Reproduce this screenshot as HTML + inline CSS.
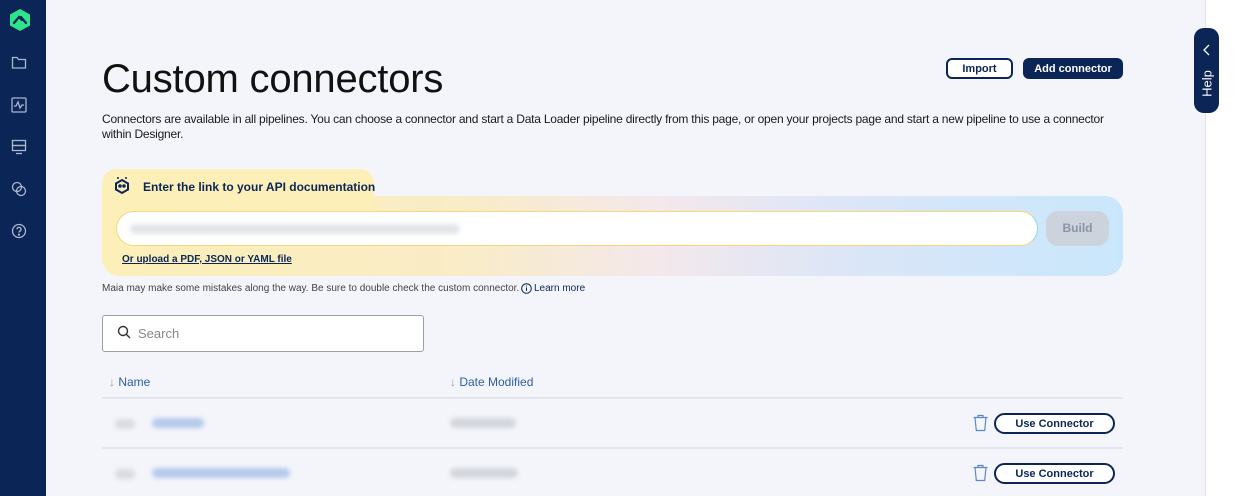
<!DOCTYPE html>
<html><head><style>
*{margin:0;padding:0;box-sizing:border-box}
body{width:1236px;height:496px;overflow:hidden;background:#fff;font-family:"Liberation Sans",sans-serif;position:relative;color:#111}
.side{position:absolute;left:0;top:0;width:46px;height:496px;background:#0b2656}
.main{position:absolute;left:46px;top:0;width:1160px;height:496px;background:#f4f5fa;border-right:1px solid #e2e4ea}
.ic{position:absolute;left:11px}
h1{position:absolute;left:102px;top:57px;font-size:40px;font-weight:400;color:#111;letter-spacing:-0.2px}
.p{position:absolute;left:102px;top:112px;width:1060px;font-size:12px;line-height:15px;color:#1a1a1a;letter-spacing:-0.22px;white-space:nowrap}
.btn{position:absolute;height:21px;border-radius:6px;font-size:11px;font-weight:bold;display:flex;align-items:center;justify-content:center}
.card{position:absolute;left:102px;top:196px;width:1021px;height:80px;border-radius:0 18px 18px 18px;background:linear-gradient(90deg,#fcefb8 0%,#f9ecc6 35%,#f3e8ec 55%,#d9e6f8 75%,#c9e7fb 100%)}
.tab{position:absolute;left:102px;top:169px;width:272px;height:40px;border-radius:14px 14px 0 0;background:#fcefb8}
.inp{position:absolute;left:116px;top:211px;width:922px;height:35px;border-radius:18px;background:#fff;border:1.5px solid #f5d87a;border-right-color:#8de0d8}
.build{position:absolute;left:1046px;top:211px;width:63px;height:35px;border-radius:12px;background:#cdd3dd;color:#8a94a6;font-weight:bold;font-size:12px;text-align:center;line-height:35px}
.blur{position:absolute;height:10px;border-radius:5px;filter:blur(2.5px)}
.search{position:absolute;left:102px;top:315px;width:322px;height:37px;border:1px solid #9aa0a8;border-radius:3px;background:#fff}
.hdr{position:absolute;top:375px;font-size:12px;color:#2b5ea7}
.line{position:absolute;left:102px;width:1021px;height:2px;background:#e3e5ea}
.use{position:absolute;left:994px;width:121px;height:21px;border:2px solid #0b2656;border-radius:11px;font-size:11px;font-weight:bold;color:#0b2656;display:flex;align-items:center;justify-content:center;background:#fff}
</style></head><body>
<div class="side">
<svg class="ic" style="left:8px;top:8px" width="24" height="24" viewBox="0 0 24 24"><polygon points="12,1 22,6.5 22,17.5 12,23 2,17.5 2,6.5" fill="#2ee38a"/><path d="M6 15l5-6 3 3M13 9l5 6" stroke="#0b2656" stroke-width="2.2" fill="none" stroke-linecap="round"/></svg>
<svg class="ic" style="top:55px" width="16" height="15" viewBox="0 0 16 15" fill="none" stroke="#aab7cf" stroke-width="1.3"><path d="M1.5 2.5h4.5l1.5 2h7v8.5h-13z"/></svg>
<svg class="ic" style="top:97px" width="16" height="16" viewBox="0 0 16 16" fill="none" stroke="#aab7cf" stroke-width="1.3"><rect x="1" y="1" width="14" height="14" rx="1"/><path d="M3 9h2l2-4 2 6 2-3h2"/></svg>
<svg class="ic" style="top:139px" width="16" height="16" viewBox="0 0 16 16" fill="none" stroke="#aab7cf" stroke-width="1.3"><rect x="1.5" y="1.5" width="13" height="5"/><rect x="1.5" y="6.5" width="13" height="5"/><path d="M5 14.5h6"/></svg>
<svg class="ic" style="top:181px" width="16" height="16" viewBox="0 0 16 16" fill="none" stroke="#aab7cf" stroke-width="1.3"><circle cx="6" cy="6" r="4.5"/><circle cx="10" cy="10" r="4.5"/></svg>
<svg class="ic" style="top:223px" width="16" height="16" viewBox="0 0 16 16" fill="none" stroke="#aab7cf" stroke-width="1.3"><circle cx="8" cy="8" r="6.5"/><path d="M6 6.3a2 2 0 1 1 2.5 2c-.5.2-.5.6-.5 1.2"/><circle cx="8" cy="11.6" r=".5" fill="#aab7cf"/></svg>
</div>
<div class="main"></div>
<div style="position:absolute;left:1194px;top:28px;width:25px;height:85px;background:#0b2656;border-radius:10px"></div>
<svg style="position:absolute;left:1202px;top:44px" width="10" height="12" viewBox="0 0 10 12"><path d="M7 1L2 6l5 5" stroke="#fff" stroke-width="1.3" fill="none"/></svg>
<div style="position:absolute;left:1187px;top:76px;width:40px;transform:rotate(-90deg);color:#fff;font-size:13px;text-align:center">Help</div>
<h1>Custom connectors</h1>
<div class="btn" style="left:946px;top:58px;width:67px;border:2px solid #0b2656;background:#fff;color:#0b2656">Import</div>
<div class="btn" style="left:1023px;top:58px;width:100px;background:#0b2656;color:#fff">Add connector</div>
<div class="p">Connectors are available in all pipelines. You can choose a connector and start a Data Loader pipeline directly from this page, or open your projects page and start a new pipeline to use a connector<br>within Designer.</div>
<div class="card"></div><div class="tab"></div>
<svg style="position:absolute;left:112px;top:176px" width="20" height="20" viewBox="0 0 20 20" fill="none" stroke="#0b2656" stroke-width="2"><path d="M10 4l6 3.5v6L10 17l-6-3.5v-6z"/><circle cx="8" cy="10" r=".8" fill="#0b2656"/><circle cx="12" cy="10" r=".8" fill="#0b2656"/><circle cx="6" cy="2" r="1" fill="#0b2656" stroke="none"/><circle cx="14" cy="2" r="1" fill="#0b2656" stroke="none"/></svg>
<div style="position:absolute;left:143px;top:180px;font-size:12px;font-weight:bold;color:#0b2656">Enter the link to your API documentation</div>
<div class="inp"></div>
<div class="blur" style="left:130px;top:224px;width:330px;background:#e2e4e9"></div>
<div class="build">Build</div>
<div style="position:absolute;left:122px;top:254px;font-size:10px;font-weight:bold;color:#0b2656;text-decoration:underline">Or upload a PDF, JSON or YAML file</div>
<div style="position:absolute;left:102px;top:283px;font-size:10px;color:#444">Maia may make some mistakes along the way. Be sure to double check the custom connector.</div>
<svg style="position:absolute;left:521px;top:283px" width="11" height="11" viewBox="0 0 11 11" fill="none" stroke="#0b2656"><circle cx="5.5" cy="5.5" r="4.8"/><path d="M5.5 4.5v3.5M5.5 2.5v1"/></svg>
<div style="position:absolute;left:534px;top:283px;font-size:10px;color:#0b2656">Learn more</div>
<div class="search"></div>
<svg style="position:absolute;left:117px;top:325px" width="14" height="14" viewBox="0 0 14 14" fill="none" stroke="#333" stroke-width="1.4"><circle cx="6" cy="6" r="4.5"/><path d="M9.5 9.5L13 13"/></svg>
<div style="position:absolute;left:138px;top:326px;font-size:13px;color:#888">Search</div>
<div class="hdr" style="left:109px"><span style="color:#999">↓</span> Name</div>
<div class="hdr" style="left:450px"><span style="color:#999">↓</span> Date Modified</div>
<div class="line" style="top:397px"></div><div class="line" style="top:447px"></div>
<div class="blur" style="left:115px;top:419px;width:20px;background:#d8dbe1"></div>
<div class="blur" style="left:152px;top:418px;width:52px;background:#b4c9ec"></div>
<div class="blur" style="left:450px;top:418px;width:66px;background:#d2d5dc"></div>
<div class="blur" style="left:115px;top:469px;width:20px;background:#d8dbe1"></div>
<div class="blur" style="left:152px;top:468px;width:138px;background:#b4c9ec"></div>
<div class="blur" style="left:450px;top:468px;width:68px;background:#d2d5dc"></div>
<svg style="position:absolute;left:972px;top:414px" width="17" height="18" viewBox="0 0 17 18" fill="none" stroke="#5a88c4" stroke-width="1.2"><path d="M1.5 3.5h14M6 3.5V1.5h5v2M3 3.5l1.3 13h8.4l1.3-13"/></svg>
<svg style="position:absolute;left:972px;top:464px" width="17" height="18" viewBox="0 0 17 18" fill="none" stroke="#5a88c4" stroke-width="1.2"><path d="M1.5 3.5h14M6 3.5V1.5h5v2M3 3.5l1.3 13h8.4l1.3-13"/></svg>
<div class="use" style="top:413px">Use Connector</div>
<div class="use" style="top:463px">Use Connector</div>
</body></html>
